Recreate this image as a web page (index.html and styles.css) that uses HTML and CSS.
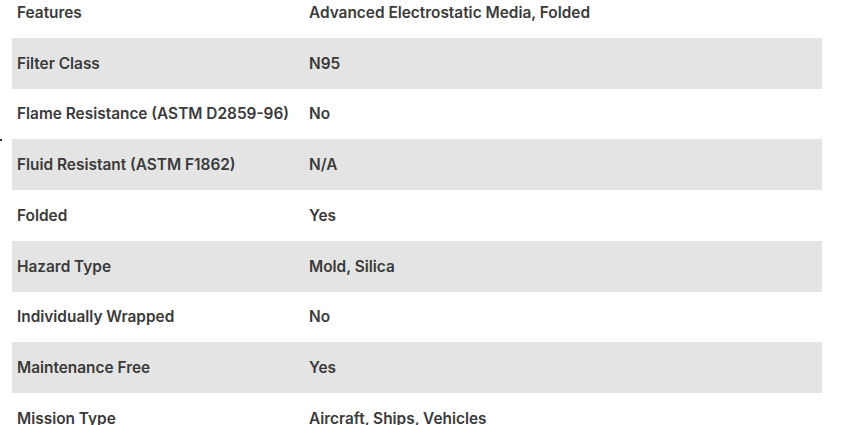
FILE: index.html
```html
<!DOCTYPE html>
<html>
<head>
<meta charset="utf-8">
<link rel="stylesheet" href="styles.css">
</head>
<body>
<span class="dot"></span>
<table class="specs">
  <tbody>
    <tr><td class="k">Features</td><td class="v">Advanced Electrostatic Media, Folded</td></tr>
    <tr><td class="k">Filter Class</td><td class="v">N95</td></tr>
    <tr><td class="k">Flame Resistance (ASTM D2859-96)</td><td class="v">No</td></tr>
    <tr><td class="k">Fluid Resistant (ASTM F1862)</td><td class="v">N/A</td></tr>
    <tr><td class="k">Folded</td><td class="v">Yes</td></tr>
    <tr><td class="k">Hazard Type</td><td class="v">Mold, Silica</td></tr>
    <tr><td class="k">Individually Wrapped</td><td class="v">No</td></tr>
    <tr><td class="k">Maintenance Free</td><td class="v">Yes</td></tr>
    <tr><td class="k">Mission Type</td><td class="v">Aircraft, Ships, Vehicles</td></tr>
  </tbody>
</table>
</body>
</html>
```

FILE: styles.css
```css
html, body {
  margin: 0;
  padding: 0;
  background: #ffffff;
  overflow: hidden;
}
body {
  position: relative;
  font-family: "Inter", "Liberation Sans", sans-serif;
  font-weight: 600;
  font-size: 15.4px;
  letter-spacing: 0;
  color: #3a3a3a;
}
.dot {
  position: absolute;
  left: 0;
  top: 139px;
  width: 2px;
  height: 2px;
  background: #333;
}
.specs {
  border-collapse: collapse;
  margin: -13px 0 0 12px;
  width: 810px;
}
.specs tr {
  height: 50.75px;
}
.specs tr:nth-child(even) {
  background: #e4e4e4;
}
.specs td {
  padding: 1px 0 0 5px;
  vertical-align: middle;
  line-height: 20px;
}
.specs td.k {
  width: 287px;
}
```
